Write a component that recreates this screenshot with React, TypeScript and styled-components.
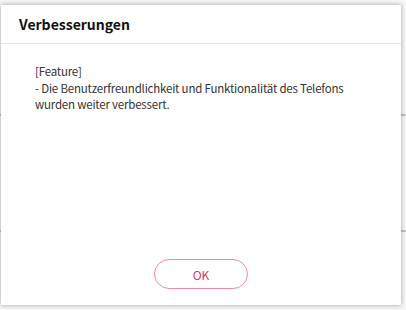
import * as React from "react";
import styled, { createGlobalStyle } from "styled-components";

const GlobalStyle = createGlobalStyle`
  html, body {
    margin: 0;
    padding: 0;
    background: #f4f4f4;
    font-family: "Noto Sans CJK KR", "Noto Sans", sans-serif;
  }
`;

export default function App() {
  return (
    <>
      <GlobalStyle />
      <Screen>
        <BackRow />
        <BackRow />
        <BackRow />
        <Dialog>
          <Header>
            <Title>Verbesserungen</Title>
          </Header>
          <Body>
            <Line>[Feature]</Line>
            <Line>- Die Benutzerfreundlichkeit und Funktionalität des Telefons</Line>
            <Line>wurden weiter verbessert.</Line>
          </Body>
          <Footer>
            <OkButton>OK</OkButton>
          </Footer>
        </Dialog>
      </Screen>
    </>
  );
}

const Screen = styled.div`
  position: relative;
  width: 406px;
  height: 310px;
  overflow: hidden;
  background: #f7f7f7;
  display: flex;
  flex-direction: column;
`;

const BackRow = styled.div`
  height: 116px;
  flex: 0 0 116px;
  box-sizing: border-box;
  border-bottom: 2px solid #c4c4c4;
`;

const Dialog = styled.div`
  position: absolute;
  left: 1px;
  top: 5px;
  width: 400px;
  height: 300px;
  background: #fff;
  box-shadow: 0 0 5px rgba(0, 0, 0, 0.35);
  display: flex;
  flex-direction: column;
`;

const Header = styled.div`
  height: 39px;
  box-sizing: border-box;
  border-bottom: 1px solid #e6e6e6;
  display: flex;
  align-items: center;
  padding: 0 18px;
`;

const Title = styled.h1`
  margin: 0;
  font-size: 14px;
  font-weight: 700;
  color: #111;
`;

const Body = styled.div`
  flex: 1;
  padding: 19px 34px 0;
  color: #333;
  font-size: 11.5px;
  line-height: 16.5px;
  letter-spacing: -0.2px;
`;

const Line = styled.div`
  white-space: nowrap;
`;

const Footer = styled.div`
  display: flex;
  justify-content: center;
  padding-bottom: 16px;
`;

const OkButton = styled.button`
  width: 94px;
  height: 30px;
  border: 1px solid #ea8bab;
  border-radius: 15px;
  background: #fff;
  color: #e0306c;
  font-family: "Noto Sans CJK KR", sans-serif;
  font-size: 12px;
  cursor: pointer;
`;
